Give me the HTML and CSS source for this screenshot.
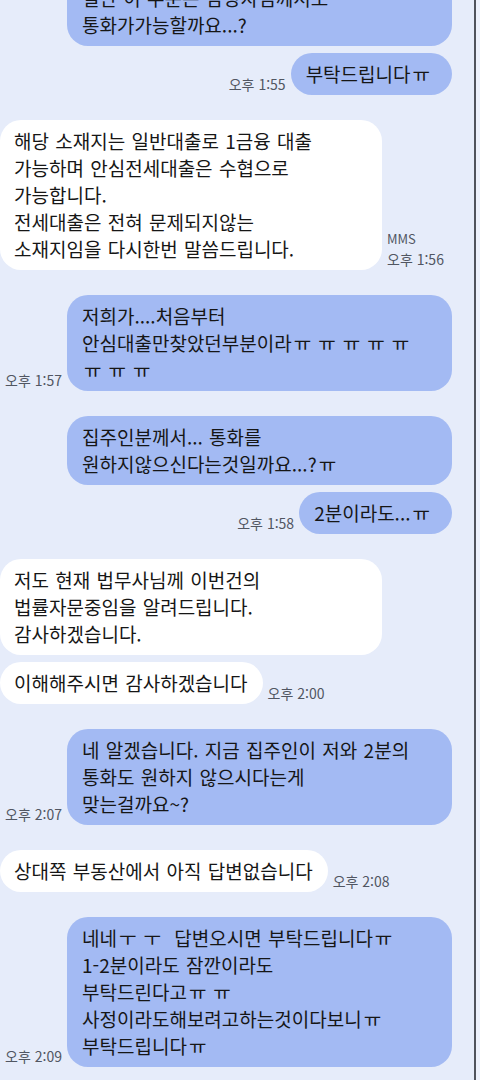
FILE: index.html
```html
<!DOCTYPE html>
<html lang="ko">
<head>
    <meta charset="UTF-8">
    <meta name="viewport" content="width=device-width, initial-scale=1.0">
    <title>메시지</title>
    <link rel="stylesheet" href="styles.css">
</head>
<body>
    <div class="chat">
        <div class="row sent first">
            <div class="bubble wide">일단 이 부분은 담당자님께서도<br>통화가가능할까요...?</div>
        </div>
        <div class="row sent cont">
            <span class="time">오후 1:55</span>
            <div class="bubble">부탁드립니다<span class="jamo">ㅠ</span></div>
        </div>

        <div class="row recv">
            <div class="bubble wide">해당 소재지는 일반대출로 1금융 대출<br>가능하며 안심전세대출은 수협으로<br>가능합니다.<br>전세대출은 전혀 문제되지않는<br>소재지임을 다시한번 말씀드립니다.</div>
            <div class="meta">
                <span class="tag">MMS</span>
                <span class="time">오후 1:56</span>
            </div>
        </div>

        <div class="row sent">
            <span class="time">오후 1:57</span>
            <div class="bubble wide">저희가....처음부터<br>안심대출만찾았던부분이라<span class="jamo">ㅠㅠㅠㅠㅠ</span><br><span class="jamo">ㅠㅠㅠ</span></div>
        </div>

        <div class="row sent">
            <div class="bubble wide">집주인분께서... 통화를<br>원하지않으신다는것일까요...?<span class="jamo">ㅠ</span></div>
        </div>
        <div class="row sent cont">
            <span class="time">오후 1:58</span>
            <div class="bubble">2분이라도...<span class="jamo">ㅠ</span></div>
        </div>

        <div class="row recv">
            <div class="bubble wide">저도 현재 법무사님께 이번건의<br>법률자문중임을 알려드립니다.<br>감사하겠습니다.</div>
        </div>
        <div class="row recv cont">
            <div class="bubble">이해해주시면 감사하겠습니다</div>
            <span class="time">오후 2:00</span>
        </div>

        <div class="row sent">
            <span class="time">오후 2:07</span>
            <div class="bubble wide">네 알겠습니다. 지금 집주인이 저와 2분의<br>통화도 원하지 않으시다는게<br>맞는걸까요~?</div>
        </div>

        <div class="row recv">
            <div class="bubble">상대쪽 부동산에서 아직 답변없습니다</div>
            <span class="time">오후 2:08</span>
        </div>

        <div class="row sent">
            <span class="time">오후 2:09</span>
            <div class="bubble wide">네네<span class="jamo">ㅜㅜ</span> 답변오시면 부탁드립니다<span class="jamo">ㅠ</span><br>1-2분이라도 잠깐이라도<br>부탁드린다고<span class="jamo">ㅠㅠ</span><br>사정이라도해보려고하는것이다보니<span class="jamo">ㅠ</span><br>부탁드립니다<span class="jamo">ㅠ</span></div>
        </div>
    </div>
</body>
</html>
```

FILE: styles.css
```css
body {
    margin: 0;
    background-color: #edf1fc;
    font-family: "Noto Sans CJK KR", "Noto Sans", sans-serif;
}
.chat {
    display: flex;
    flex-direction: column;
    width: 474px;
    height: 1080px;
    overflow: hidden;
    background-color: #e6ecfa;
    border-right: 2px solid #50535c;
}
.row {
    display: flex;
    align-items: flex-end;
    gap: 5px;
    margin-top: 25px;
}
.row.cont {
    margin-top: 7px;
}
.row.first {
    margin-top: -23px;
}
.sent {
    justify-content: flex-end;
    padding-right: 22px;
}
.recv {
    justify-content: flex-start;
}
.bubble {
    font-size: 19px;
    line-height: 27px;
    word-spacing: 1px;
    padding: 7px 15px 8px;
    border-radius: 21px;
    color: #161616;
    white-space: nowrap;
}
.jamo {
    letter-spacing: 7px;
    margin-left: 2px;
}
.sent .bubble {
    background-color: #a3baf3;
}
.recv .bubble {
    background-color: #ffffff;
    padding-left: 14px;
}
.bubble.wide {
    width: 385px;
    box-sizing: border-box;
}
.recv .bubble.wide {
    width: 382px;
}
.time {
    font-size: 14px;
    line-height: 17px;
    color: #515662;
    margin-bottom: 2px;
    white-space: nowrap;
}
.meta {
    display: flex;
    flex-direction: column;
    gap: 5px;
}
.tag {
    font-size: 13px;
    line-height: 15px;
    color: #515662;
}
```
